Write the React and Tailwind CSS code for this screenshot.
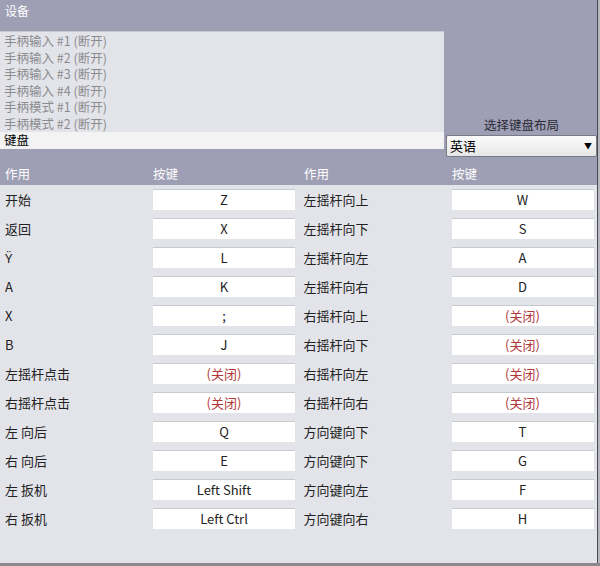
import React from 'react';

const devices = [
  '手柄输入 #1 (断开)',
  '手柄输入 #2 (断开)',
  '手柄输入 #3 (断开)',
  '手柄输入 #4 (断开)',
  '手柄模式 #1 (断开)',
  '手柄模式 #2 (断开)',
];

const OFF = null;

const rows = [
  ['开始', 'Z', '左摇杆向上', 'W'],
  ['返回', 'X', '左摇杆向下', 'S'],
  ['Ÿ', 'L', '左摇杆向左', 'A'],
  ['A', 'K', '左摇杆向右', 'D'],
  ['X', ';', '右摇杆向上', OFF],
  ['B', 'J', '右摇杆向下', OFF],
  ['左摇杆点击', OFF, '右摇杆向左', OFF],
  ['右摇杆点击', OFF, '右摇杆向右', OFF],
  ['左 向后', 'Q', '方向键向下', 'T'],
  ['右 向后', 'E', '方向键向下', 'G'],
  ['左 扳机', 'Left Shift', '方向键向左', 'F'],
  ['右 扳机', 'Left Ctrl', '方向键向右', 'H'],
];

const KeyBox = ({ value }) => (
  <div className="w-[142px] h-[21px] bg-white border-t border-[#c9cacf] flex items-center justify-center">
    {value === OFF ? (
      <span className="text-[#b03838]">(关闭)</span>
    ) : (
      <span className="text-[#222]">{value}</span>
    )}
  </div>
);

const Half = ({ label, value }) => (
  <div className="w-[299px] flex items-center">
    <div className="w-[153px] pl-[5px] text-[#222]">{label}</div>
    <KeyBox value={value} />
  </div>
);

export default function App() {
  return (
    <div
      className="w-[600px] h-[566px] flex flex-col bg-[#8a8a8e] text-[13px] leading-[16px]"
      style={{ fontFamily: '"Noto Sans CJK SC", "Noto Sans", sans-serif' }}
    >
      <div className="flex flex-1 min-h-0">
        <div className="w-[598px] flex flex-col border-r border-[#4a4a52]">
          {/* device section */}
          <div className="bg-[#9e9eb4] h-[185px] flex flex-col">
            <div className="h-[31px] pl-[5px] pt-[3px] text-white text-[12px]">设备</div>
            <div className="flex">
              <div className="w-[444px] h-[118px] bg-[#e3e4e9] border-t border-[#c6c7d2] flex flex-col pt-[1px] text-[12.5px] leading-[16px]">
                {devices.map((d) => (
                  <div key={d} className="h-[16.5px] pl-[4px] flex items-center text-[#8c8c90]">
                    {d}
                  </div>
                ))}
                <div className="h-[16.5px] pl-[4px] flex items-center bg-[#f3f3f3] text-black">键盘</div>
              </div>
              <div className="flex-1 flex flex-col justify-end pl-[2px]">
                <div className="text-center text-[#2a2a34] text-[12.5px] pb-[2px]">选择键盘布局</div>
                <div className="h-[22px] mb-[-8px] rounded-[2px] border border-[#7a7a86] bg-gradient-to-b from-[#fbfbfb] to-[#e6e6e8] flex items-center justify-between pl-[3px] pr-[4px] text-black">
                  <span>英语</span>
                  <span className="text-[8px]">▼</span>
                </div>
              </div>
            </div>
            <div className="mt-auto h-[22px] flex items-center text-white text-[12.5px]">
              <div className="w-[153px] pl-[5px]">作用</div>
              <div className="w-[146px]">按键</div>
              <div className="w-[153px] pl-[5px]">作用</div>
              <div>按键</div>
            </div>
          </div>
          {/* key table */}
          <div className="flex-1 bg-[#e3e4e9] pt-[4px] flex flex-col">
            {rows.map((r, i) => (
              <div key={i} className="h-[29px] flex items-start">
                <Half label={r[0]} value={r[1]} />
                <Half label={r[2]} value={r[3]} />
              </div>
            ))}
          </div>
        </div>
        <div className="flex-1 bg-[#b8b8c0]" />
      </div>
      <div className="h-[3px] bg-[#8a8a8e]" />
    </div>
  );
}
